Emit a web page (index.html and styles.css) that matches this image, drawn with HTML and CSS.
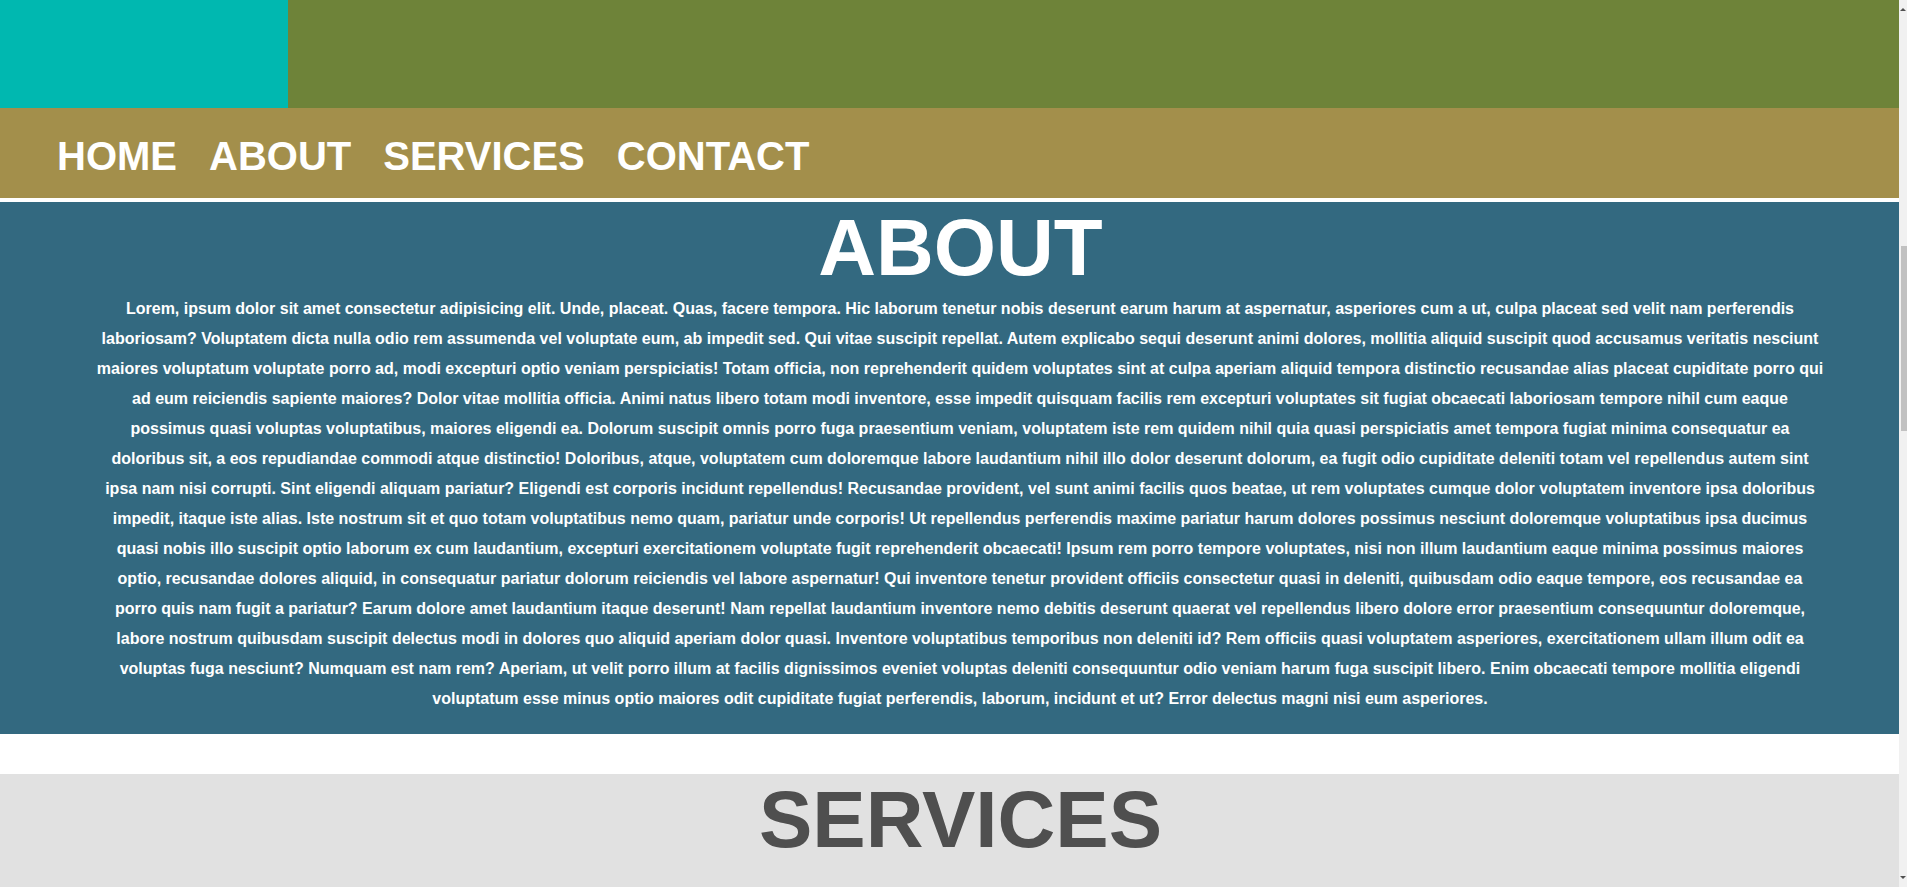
FILE: index.html
```html
<!DOCTYPE html>
<html lang="en">
<head>
<meta charset="utf-8">
<title>About</title>
<link rel="stylesheet" href="styles.css">
</head>
<body>
<header class="topbar">
  <div class="logo-block"></div>
</header>
<nav class="nav">
  <ul class="nav-list">
    <li><a class="nav-link" href="#home">HOME</a></li>
    <li><a class="nav-link" href="#about">ABOUT</a></li>
    <li><a class="nav-link" href="#services">SERVICES</a></li>
    <li><a class="nav-link" href="#contact">CONTACT</a></li>
  </ul>
</nav>
<section class="about" id="about">
  <h1 class="section-title">ABOUT</h1>
  <p class="about-text">Lorem, ipsum dolor sit amet consectetur adipisicing elit. Unde, placeat. Quas, facere tempora. Hic laborum tenetur nobis deserunt earum harum at aspernatur, asperiores cum a ut, culpa placeat sed velit nam perferendis laboriosam? Voluptatem dicta nulla odio rem assumenda vel voluptate eum, ab impedit sed. Qui vitae suscipit repellat. Autem explicabo sequi deserunt animi dolores, mollitia aliquid suscipit quod accusamus veritatis nesciunt maiores voluptatum voluptate porro ad, modi excepturi optio veniam perspiciatis! Totam officia, non reprehenderit quidem voluptates sint at culpa aperiam aliquid tempora distinctio recusandae alias placeat cupiditate porro qui ad eum reiciendis sapiente maiores? Dolor vitae mollitia officia. Animi natus libero totam modi inventore, esse impedit quisquam facilis rem excepturi voluptates sit fugiat obcaecati laboriosam tempore nihil cum eaque possimus quasi voluptas voluptatibus, maiores eligendi ea. Dolorum suscipit omnis porro fuga praesentium veniam, voluptatem iste rem quidem nihil quia quasi perspiciatis amet tempora fugiat minima consequatur ea doloribus sit, a eos repudiandae commodi atque distinctio! Doloribus, atque, voluptatem cum doloremque labore laudantium nihil illo dolor deserunt dolorum, ea fugit odio cupiditate deleniti totam vel repellendus autem sint ipsa nam nisi corrupti. Sint eligendi aliquam pariatur? Eligendi est corporis incidunt repellendus! Recusandae provident, vel sunt animi facilis quos beatae, ut rem voluptates cumque dolor voluptatem inventore ipsa doloribus impedit, itaque iste alias. Iste nostrum sit et quo totam voluptatibus nemo quam, pariatur unde corporis! Ut repellendus perferendis maxime pariatur harum dolores possimus nesciunt doloremque voluptatibus ipsa ducimus quasi nobis illo suscipit optio laborum ex cum laudantium, excepturi exercitationem voluptate fugit reprehenderit obcaecati! Ipsum rem porro tempore voluptates, nisi non illum laudantium eaque minima possimus maiores optio, recusandae dolores aliquid, in consequatur pariatur dolorum reiciendis vel labore aspernatur! Qui inventore tenetur provident officiis consectetur quasi in deleniti, quibusdam odio eaque tempore, eos recusandae ea porro quis nam fugit a pariatur? Earum dolore amet laudantium itaque deserunt! Nam repellat laudantium inventore nemo debitis deserunt quaerat vel repellendus libero dolore error praesentium consequuntur doloremque, labore nostrum quibusdam suscipit delectus modi in dolores quo aliquid aperiam dolor quasi. Inventore voluptatibus temporibus non deleniti id? Rem officiis quasi voluptatem asperiores, exercitationem ullam illum odit ea voluptas fuga nesciunt? Numquam est nam rem? Aperiam, ut velit porro illum at facilis dignissimos eveniet voluptas deleniti consequuntur odio veniam harum fuga suscipit libero. Enim obcaecati tempore mollitia eligendi voluptatum esse minus optio maiores odit cupiditate fugiat perferendis, laborum, incidunt et ut? Error delectus magni nisi eum asperiores.</p>
</section>
<div class="spacer"></div>
<section class="services" id="services">
  <h1 class="section-title dark">SERVICES</h1>
</section>
<div class="fake-scrollbar" aria-hidden="true">
  <span class="sb-arrow sb-up"></span>
  <span class="sb-thumb"></span>
  <span class="sb-arrow sb-down"></span>
</div>
</body>
</html>
```
FILE: styles.css
```css
html {
  background: #ffffff;
}
body {
  margin: 0;
  font-family: "Liberation Sans", Arial, sans-serif;
  font-weight: bold;
}
.topbar {
  display: flex;
  height: 108px;
  background: #6e8339;
}
.logo-block {
  width: 288px;
  background: #00b8b0;
}
.nav {
  background: #a38f4b;
  padding: 25px 0 19px 57px;
  margin-bottom: 4px;
}
.nav-list {
  display: flex;
  gap: 32px;
  margin: 0;
  padding: 0;
  list-style: none;
}
.nav-link {
  display: block;
  color: #ffffff;
  text-decoration: none;
  font-size: 40px;
  line-height: 46px;
}
.about {
  background: #336980;
  color: #ffffff;
  padding-bottom: 20px;
}
.section-title {
  margin: 0;
  text-align: center;
  font-size: 80px;
  line-height: 92px;
  padding-left: 14px;
}
.about-text {
  margin: 0 82px 0 95px;
  text-align: center;
  font-size: 16px;
  line-height: 30px;
}
.spacer {
  height: 40px;
}
.services {
  background: #e1e1e1;
  min-height: 500px;
}
.section-title.dark {
  color: #4f4f4f;
}
.fake-scrollbar {
  position: fixed;
  top: 0;
  right: 0;
  width: 8px;
  height: 100vh;
  background: #f1f1f1;
}
.sb-thumb {
  position: absolute;
  top: 246px;
  right: 0;
  width: 6px;
  height: 185px;
  background: #c1c1c1;
}
.sb-arrow {
  position: absolute;
  right: 1px;
  width: 0;
  height: 0;
  border-left: 3px solid transparent;
  border-right: 3px solid transparent;
}
.sb-up {
  top: 8px;
  border-bottom: 3px solid #505050;
}
.sb-down {
  bottom: 8px;
  border-top: 3px solid #505050;
}
```
